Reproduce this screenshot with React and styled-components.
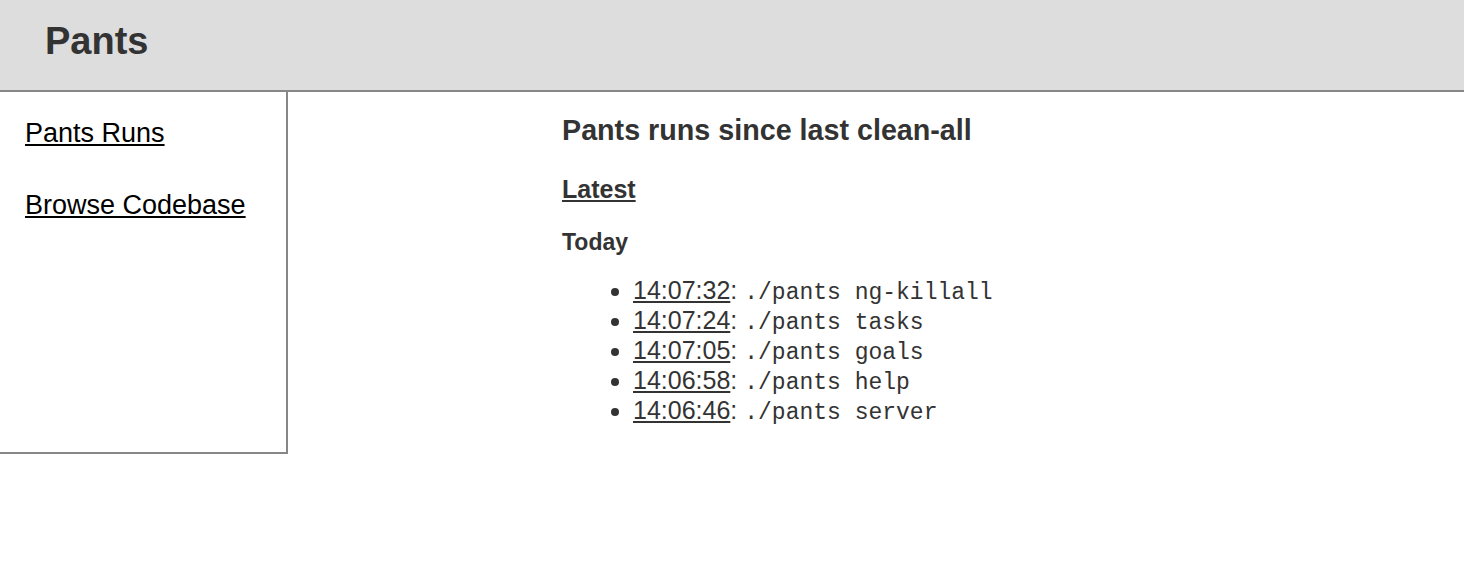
import React from 'react';
import styled, { createGlobalStyle } from 'styled-components';

const GlobalStyle = createGlobalStyle`
  body {
    margin: 0;
    background: #fff;
    font-family: "Liberation Sans", Arial, sans-serif;
    color: #333;
  }
`;

const Header = styled.header`
  box-sizing: border-box;
  height: 92px;
  background-color: #ddd;
  border-bottom: 2px solid #878787;
  padding: 19px 0 0 45px;
`;

const Title = styled.h1`
  margin: 0;
  font-size: 38px;
  line-height: 44px;
  font-weight: bold;
  color: #333;
`;

const Body = styled.div`
  display: flex;
  align-items: flex-start;
`;

const Sidebar = styled.nav`
  box-sizing: border-box;
  width: 288px;
  height: 362px;
  flex-shrink: 0;
  border-right: 2px solid #878787;
  border-bottom: 2px solid #878787;
  padding: 25px 0 0 25px;
  display: flex;
  flex-direction: column;
  gap: 40px;
`;

const NavLink = styled.a`
  font-size: 27px;
  line-height: 32px;
  color: #000;
  text-decoration: underline;
  align-self: flex-start;
`;

const Main = styled.main`
  padding: 21px 0 0 274px;
`;

const Heading = styled.h2`
  margin: 0;
  font-size: 28.7px;
  line-height: 34px;
  font-weight: bold;
`;

const SubHeading = styled.h3`
  margin: 27px 0 0;
  font-size: 25px;
  line-height: 30px;
  font-weight: bold;

  a {
    color: #333;
    text-decoration: underline;
  }
`;

const DayLabel = styled.h4`
  margin: 24px 0 0;
  font-size: 23px;
  line-height: 28px;
  font-weight: bold;
`;

const RunList = styled.ul`
  margin: 19px 0 0;
  padding-left: 71px;
`;

const RunItem = styled.li`
  font-size: 25px;
  line-height: 30px;
`;

const TimeLink = styled.a`
  color: #333;
  text-decoration: underline;
`;

const Command = styled.code`
  font-family: "Liberation Mono", "Courier New", monospace;
  font-size: 23px;
  line-height: 1;
`;

const runs = [
  { time: '14:07:32', cmd: './pants ng-killall' },
  { time: '14:07:24', cmd: './pants tasks' },
  { time: '14:07:05', cmd: './pants goals' },
  { time: '14:06:58', cmd: './pants help' },
  { time: '14:06:46', cmd: './pants server' },
];

export default function App() {
  return (
    <>
      <GlobalStyle />
      <Header>
        <Title>Pants</Title>
      </Header>
      <Body>
        <Sidebar>
          <NavLink href="#">Pants Runs</NavLink>
          <NavLink href="#">Browse Codebase</NavLink>
        </Sidebar>
        <Main>
          <Heading>Pants runs since last clean-all</Heading>
          <SubHeading>
            <a href="#">Latest</a>
          </SubHeading>
          <DayLabel>Today</DayLabel>
          <RunList>
            {runs.map((run) => (
              <RunItem key={run.time}>
                <TimeLink href="#">{run.time}</TimeLink>: <Command>{run.cmd}</Command>
              </RunItem>
            ))}
          </RunList>
        </Main>
      </Body>
    </>
  );
}
